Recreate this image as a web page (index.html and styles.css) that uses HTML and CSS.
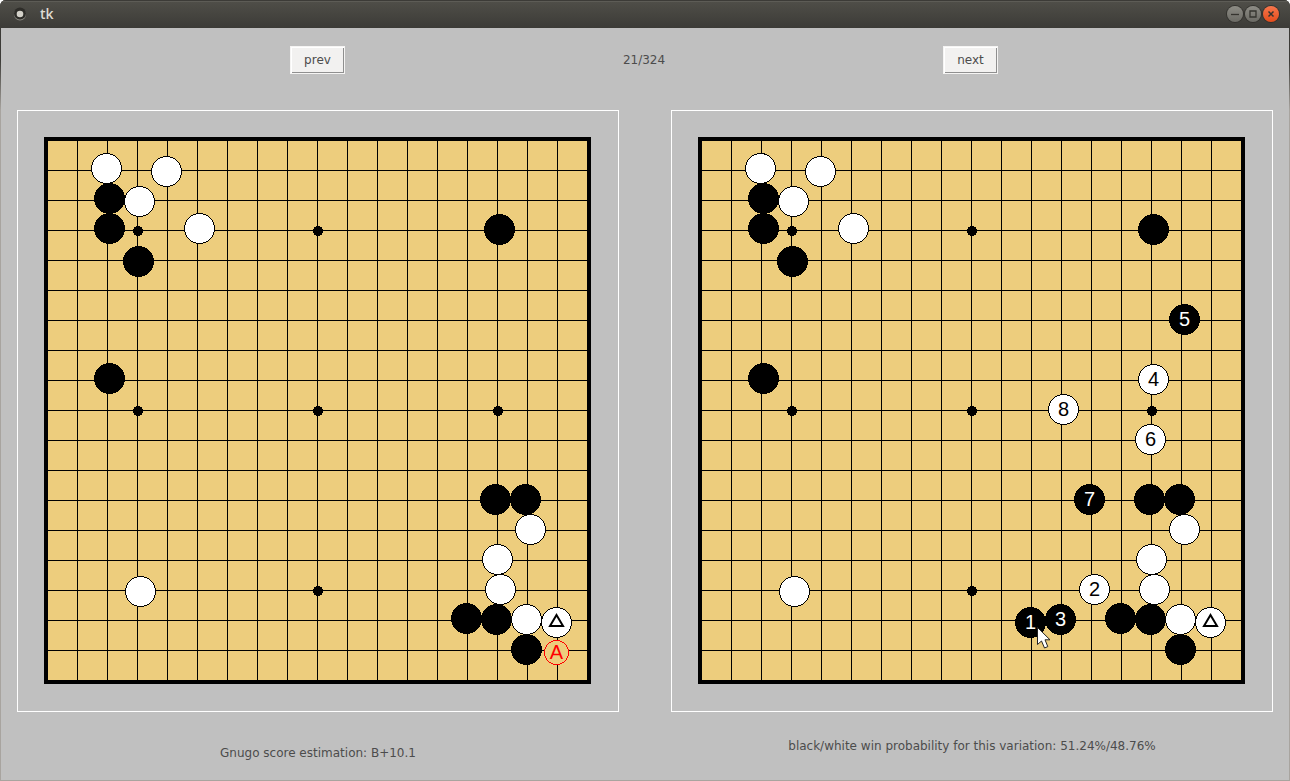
FILE: index.html
```html
<!DOCTYPE html>
<html lang="en">
<head>
    <meta charset="UTF-8">
    <meta name="viewport" content="width=device-width, initial-scale=1.0">
    <title>tk</title>
    <link rel="stylesheet" href="styles.css">
</head>
<body>
    <div class="window">
        <header class="titlebar">
            <svg class="app-icon" width="14" height="14" viewBox="0 0 14 14" aria-hidden="true">
                <circle cx="7" cy="7.5" r="6" fill="#8b8a83"/>
                <circle cx="7" cy="6.5" r="6" fill="#2e2d29"/>
                <circle cx="7" cy="7" r="3.3" fill="#d3d1c9"/>
            </svg>
            <h1 class="title">tk</h1>
            <div class="window-buttons">
                <button type="button" class="window-button" aria-label="Minimize">
                    <svg width="16" height="16" viewBox="0 0 16 16"><path d="M4 8.5h8"/></svg>
                </button>
                <button type="button" class="window-button" aria-label="Maximize">
                    <svg width="16" height="16" viewBox="0 0 16 16"><path d="M5 5h6v6h-6z"/></svg>
                </button>
                <button type="button" class="window-button close" aria-label="Close">
                    <svg width="16" height="16" viewBox="0 0 16 16"><path d="M5.5 5.5l5 5M10.5 5.5l-5 5" stroke-width="1.5"/></svg>
                </button>
            </div>
        </header>

        <main class="review">
            <nav class="controls">
                <button type="button" class="tk-button" id="prevButton">prev</button>
                <span class="counter">21/324</span>
                <button type="button" class="tk-button" id="nextButton">next</button>
            </nav>

            <div class="boards">
                <svg class="board" id="gameBoard" viewBox="0 0 602 602" role="img" aria-label="Game position"></svg>
                <svg class="board" id="variationBoard" viewBox="0 0 602 602" role="img" aria-label="Variation"></svg>
            </div>

            <div class="comments">
                <p class="comment estimation">Gnugo score estimation: B+10.1</p>
                <p class="comment probability">black/white win probability for this variation: 51.24%/48.76%</p>
            </div>
        </main>
    </div>

    <script>
        const SVG_NS = 'http://www.w3.org/2000/svg';

        // [colour, x, y, label], stones are placed slightly off the intersections
        const position = [
            ['white', 89.5, 58.5],
            ['white', 149.5, 61.5],
            ['black', 92.5, 88.5],
            ['white', 122.5, 91.5],
            ['black', 92.5, 118.5],
            ['white', 182.5, 118.5],
            ['black', 121.5, 151.5],
            ['black', 482.5, 119.5],
            ['black', 92.5, 268.5],
            ['black', 478.5, 389.5],
            ['black', 508.5, 389.5],
            ['white', 513.5, 419.5],
            ['white', 480.5, 449.5],
            ['white', 483.5, 479.5],
            ['white', 123.5, 481.5],
            ['black', 449.5, 508.5],
            ['black', 479.5, 509.5],
            ['white', 509.5, 509.5],
            ['white', 539.5, 512.5],
            ['black', 509.5, 539.5]
        ];

        const variation = [
            ['black', 359.5, 512.5, '1'],
            ['white', 423.5, 479.5, '2'],
            ['black', 389.5, 509.5, '3'],
            ['white', 482.5, 269.5, '4'],
            ['black', 513.5, 209.5, '5'],
            ['white', 479.5, 329.5, '6'],
            ['black', 418.5, 389.5, '7'],
            ['white', 392.5, 299.5, '8']
        ];

        function add(board, name, attributes, text) {
            const element = document.createElementNS(SVG_NS, name);
            for (const key in attributes) {
                element.setAttribute(key, attributes[key]);
            }
            if (text) {
                element.textContent = text;
            }
            board.appendChild(element);
        }

        function drawStone(board, [color, x, y, label]) {
            add(board, 'circle', { class: 'stone ' + color, cx: x, cy: y, r: 15 });
            if (label) {
                add(board, 'text', { class: 'label on-' + color, x: x, y: y + 6.5 }, label);
            }
        }

        function drawBoard(board) {
            add(board, 'rect', { class: 'goban', x: 29, y: 29, width: 543, height: 543 });
            for (let i = 0; i < 17; i++) {
                const p = 60.5 + 30 * i;
                add(board, 'path', { class: 'line', d: `M${p} 31V570M31 ${p}H570` });
            }
            for (const x of [121, 301, 481]) {
                for (const y of [121, 301, 481]) {
                    add(board, 'circle', { cx: x, cy: y, r: 5 });
                }
            }
            position.forEach(stone => drawStone(board, stone));
            // last move
            add(board, 'path', { class: 'last-move', d: 'M539.5 505L546 516H533Z' });
        }

        const gameBoard = document.getElementById('gameBoard');
        const variationBoard = document.getElementById('variationBoard');

        drawBoard(gameBoard);
        add(gameBoard, 'circle', { class: 'candidate', cx: 539.5, cy: 542.5, r: 12 });
        add(gameBoard, 'text', { class: 'label candidate-label', x: 539.5, y: 549 }, 'A');

        drawBoard(variationBoard);
        variation.forEach(stone => drawStone(variationBoard, stone));
        // mouse pointer
        add(variationBoard, 'path', {
            class: 'pointer',
            d: 'M366.5 517.5V534.5L370.5 531L373.5 538L376.8 536.6L374 529.8H379Z'
        });
    </script>
</body>
</html>
```

FILE: styles.css
```css
* {
    box-sizing: border-box;
}
body {
    margin: 0;
    background-color: #fff;
    color: #4c4c4c;
    font-family: "DejaVu Sans", sans-serif;
    font-size: 12px;
    line-height: 16px;
}
.window {
    display: flex;
    flex-direction: column;
    min-height: 100vh;
    padding: 0 1px 1px;
    background: linear-gradient(#3c3b37 60px, #a8a49f 110px);
    border-radius: 6px 6px 0 0;
    overflow: hidden;
}

/* --- title bar --- */
.titlebar {
    display: flex;
    align-items: center;
    height: 28px;
    margin: 0 -1px;
    padding: 0 11px 0 13px;
    background: linear-gradient(#504f49, #3c3b37);
    box-shadow: inset 0 1px #3c3b37, inset 0 2px #5d5c56;
}
.title {
    flex: 1;
    margin: 0 0 0 13px;
    color: #dfdbd2;
    font-family: "Open Sans", sans-serif;
    font-size: 14px;
    font-weight: 600;
}
.window-buttons {
    display: flex;
    gap: 2px;
}
.window-button {
    width: 16px;
    height: 16px;
    padding: 0;
    border: none;
    border-radius: 50%;
    background: linear-gradient(#8d8c85, #6b6a64);
    box-shadow: 0 0 0 1px #33322e;
}
.window-button svg {
    display: block;
    fill: none;
    stroke: #35342f;
    stroke-width: 1.3;
}
.window-button.close {
    background: linear-gradient(#f7764c, #e54c1b);
}

/* --- content --- */
.review {
    flex: 1;
    padding: 18px 16px;
    background-color: #c0c0c0;
}
.controls {
    display: grid;
    grid-template-columns: 1fr 52px 1fr;
    align-items: center;
    justify-items: center;
    padding-right: 2px;
}
.tk-button {
    width: 55px;
    height: 28px;
    padding: 0;
    border: 1px solid #f5f4f3;
    background-color: #f2f1f0;
    box-shadow: inset 1px 1px #fff, inset -1px -1px #8f8f8f;
    color: #4c4c4c;
    font: inherit;
}
.boards {
    display: grid;
    grid-template-columns: 1fr 1fr;
    gap: 52px;
    margin-top: 36px;
}
.board {
    display: block;
    width: 100%;
    outline: 1px solid #fff;
    outline-offset: -1px;
}
.board circle {
    shape-rendering: crispEdges;
}
.goban {
    fill: #edcd7d;
    stroke: #000;
    stroke-width: 4;
}
.line {
    stroke: #000;
}
.stone {
    stroke: #000;
}
.black {
    fill: #000;
}
.white {
    fill: #fff;
}
.label {
    font-family: "Liberation Sans", sans-serif;
    font-size: 20px;
    text-anchor: middle;
}
.on-black {
    fill: #fff;
}
.on-white {
    fill: #000;
}
.last-move {
    fill: none;
    stroke: #000;
    stroke-width: 2;
}
.board .candidate {
    fill: #edcd7d;
    stroke: #f00;
}
.candidate-label {
    fill: #f00;
}
.pointer {
    fill: #fff;
    stroke: #222;
}
.comments {
    display: grid;
    grid-template-columns: 1fr 1fr;
    gap: 52px;
    margin-top: 26px;
    text-align: center;
}
.comment {
    margin: 0;
}
.estimation {
    padding-top: 7px;
}
```
